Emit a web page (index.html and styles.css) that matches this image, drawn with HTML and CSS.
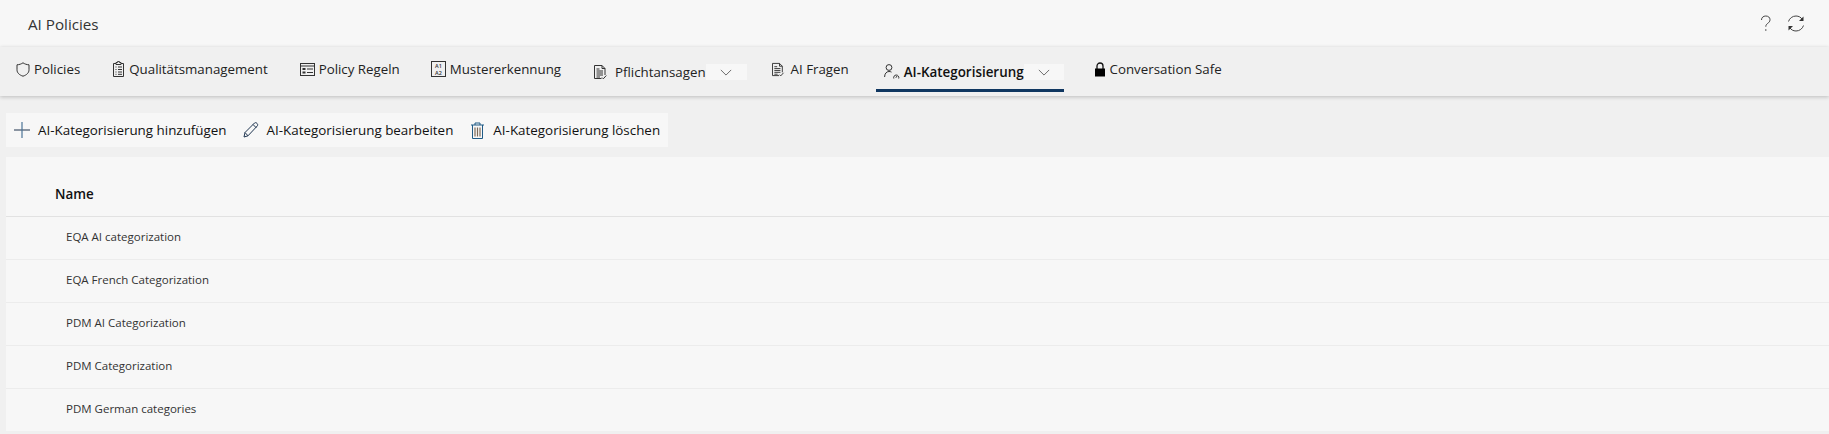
FILE: index.html
```html
<!DOCTYPE html>
<html lang="de">
<head>
<meta charset="utf-8">
<title>AI Policies</title>
<link rel="stylesheet" href="styles.css">
</head>
<body>
<svg class="defs" width="0" height="0" aria-hidden="true">
  <symbol id="doc" viewBox="1.500 0 16 16">
    <path d="M2 1.500h7.500l3 3v6.500M12.500 4.500h-3v-3M2 1.500v13h7" fill="none" stroke="#333" stroke-width="1"/>
    <path d="M4 5h3M4 7h6.500M4 9h6.500M4 11h6.500M4 13h3.500" fill="none" stroke="#333" stroke-width="1"/>
    <path d="M9.500 13.500l1.300 1.300 3-3.300" fill="none" stroke="#333" stroke-width="1"/>
  </symbol>
  <symbol id="chev" viewBox="0 0 14 8">
    <path d="M1 1l6 6 6-6" fill="none" stroke="#555" stroke-width="1"/>
  </symbol>
</svg>
<header class="title-bar">
  <h1 class="title">AI Policies</h1>
  <div class="title-actions">
    <svg class="ic-help" width="12" height="17" viewBox="0 0 12 17"><path d="M1.500 5C1.500 2.500 3.300 1 5.800 1s4.200 1.500 4.200 3.700c0 1.800-1 2.700-2.300 3.700-1.200.9-1.900 1.700-1.900 3.300" fill="none" stroke="#444" stroke-width="1"/><circle cx="5.800" cy="15" r=".8" fill="#444"/></svg>
    <svg width="18" height="17" viewBox="0 0 18 17"><path d="M1.500 6.500C2.500 3.300 5.400 1 9 1c2.700 0 5 1.300 6.300 3.400" fill="none" stroke="#444" stroke-width="1"/><path d="M16.500 10.500C15.500 13.700 12.600 16 9 16c-2.700 0-5-1.300-6.300-3.400" fill="none" stroke="#444" stroke-width="1"/><path d="M16.500 1.500v4.500h-4.500z" fill="#333"/><path d="M1.500 15.500v-4.500h4.500z" fill="#333"/></svg>
  </div>
</header>
<nav class="tabs">
  <a class="tab tab-first">
    <svg width="14" height="15" viewBox="0 0 14 15"><path d="M7 .8c1.700 1.200 3.700 1.900 6 2v5c0 3-2.200 5.100-6 6.400C3.200 12.900 1 10.800 1 7.800v-5c2.300-.1 4.300-.8 6-2z" fill="none" stroke="#333" stroke-width="1"/></svg>
    <span>Policies</span>
  </a>
  <a class="tab tab-quality">
    <svg width="13" height="16" viewBox="0 0 13 16"><path d="M4 2.500H1.500v13h10v-13H9" fill="none" stroke="#333" stroke-width="1"/><path d="M4 3.500v-2h1.500V.6h2v.9H9v2z" fill="none" stroke="#333" stroke-width="1"/><path d="M3.500 6h1M6 6h4M3.500 8.500h1M6 8.500h4M3.500 11h1M6 11h4M3.500 13.300h1M6 13.300h4" stroke="#333" stroke-width="1"/></svg>
    <span>Qualitätsmanagement</span>
  </a>
  <a class="tab tab-rules">
    <svg width="15" height="13" viewBox="0 0 15 13"><rect x=".5" y=".5" width="14" height="12" fill="none" stroke="#333"/><path d="M.5 3h14" stroke="#333"/><rect x="2.500" y="5" width="3" height="2" fill="#333"/><rect x="2.500" y="8.500" width="3" height="2" fill="#333"/><path d="M7 6h6M7 9.500h6" stroke="#333"/></svg>
    <span>Policy Regeln</span>
  </a>
  <a class="tab tab-pattern">
    <svg width="15" height="16" viewBox="0 0 15 16"><rect x=".5" y=".5" width="14" height="15" fill="none" stroke="#333"/><text class="tiny" x="7.500" y="7">A1</text><text class="tiny" x="7.500" y="13.500">A2</text></svg>
    <span>Mustererkennung</span>
  </a>
  <a class="tab tab-drop tab-duty">
    <svg width="16" height="16"><use href="#doc"/></svg>
    <span>Pflichtansagen</span>
    <span class="chev"><svg width="12" height="7"><use href="#chev"/></svg></span>
  </a>
  <a class="tab tab-questions">
    <svg width="15" height="15"><use href="#doc"/></svg>
    <span>AI Fragen</span>
  </a>
  <a class="tab tab-drop tab-active">
    <svg class="ic-person" width="16" height="16" viewBox="0 0 16 16"><circle cx="5" cy="3.500" r="2.900" fill="none" stroke="#333"/><path d="M.6 13c0-3.300 1.800-5.500 4.400-5.500 1 0 1.800.2 2.500.6" fill="none" stroke="#333"/><path d="M9.800 14.500a2.600 2.600 0 1 1 4.900 0" fill="none" stroke="#333"/><path d="M11.800 13.800l1.300-1.800" stroke="#333"/></svg>
    <span>AI-Kategorisierung</span>
    <span class="chev"><svg width="12" height="7"><use href="#chev"/></svg></span>
  </a>
  <a class="tab tab-safe">
    <svg width="12" height="15" viewBox="0 0 12 15"><path d="M3 7V4a3 3 0 0 1 6 0v3" fill="none" stroke="#111" stroke-width="1.300"/><rect x="1" y="6.500" width="10" height="8" fill="#000"/></svg>
    <span>Conversation Safe</span>
  </a>
</nav>
<main class="content">
  <div class="toolbar">
    <button class="cmd cmd-add">
      <svg width="16" height="16" viewBox="0 0 16 16"><path d="M0 8h16" stroke="#44546a" stroke-width="1.200"/><path d="M8 0v16" stroke="#4a7396" stroke-width="1.200"/></svg>
      <span>AI-Kategorisierung hinzufügen</span>
    </button>
    <button class="cmd cmd-edit">
      <svg width="16" height="16" viewBox="0 0 16 16"><path d="M1 15l1-4.500L11.500 1c.8-.6 1.800-.4 2.500.4.800.8.900 1.700.3 2.500L5 13.800z" fill="none" stroke="#1f3550" stroke-width="1"/><path d="M2 10.500l3 3.300M10 2.500l3.300 3.300" stroke="#1f3550"/></svg>
      <span>AI-Kategorisierung bearbeiten</span>
    </button>
    <button class="cmd cmd-del">
      <svg width="15" height="17" viewBox="0 0 15 17"><path d="M1 3h13M5 3V1h5v2" fill="none" stroke="#1f5a85"/><path d="M2.500 3v13.500h10V3" fill="none" stroke="#1f5a85"/><path d="M5 5.500v9M7.500 5.500v9M10 5.500v9" stroke="#7d6a58" stroke-width="1.200"/></svg>
      <span>AI-Kategorisierung löschen</span>
    </button>
  </div>
  <section class="table">
    <div class="table-head">Name</div>
    <div class="row">EQA AI categorization</div>
    <div class="row">EQA French Categorization</div>
    <div class="row">PDM AI Categorization</div>
    <div class="row">PDM Categorization</div>
    <div class="row">PDM German categories</div>
  </section>
</main>
</body>
</html>
```

FILE: styles.css
```css
* { box-sizing: border-box; }
html, body { margin: 0; padding: 0; }
body {
  width: 1829px;
  height: 434px;
  overflow: hidden;
  background: #f0f0f0;
  color: #222;
  font-family: "Open Sans", "Liberation Sans", sans-serif;
  font-size: 13.400px;
}
.defs { position: absolute; }
svg { display: block; flex: none; }
.title-bar {
  height: 47px;
  background: #f7f7f7;
  display: flex;
  align-items: center;
  justify-content: space-between;
  padding: 0 24px 0 28px;
}
.title { margin: 0; font-size: 15.200px; font-weight: 400; color: #333; }
.title-actions { display: flex; align-items: center; gap: 15px; }
.tabs {
  height: 49px;
  background: #f0f0f0;
  padding: 0 0 4px 0;
  display: flex;
  font-size: 13.300px;
  box-shadow: 0 1px 4px rgba(0, 0, 0, .22);
  position: relative;
}
.tab {
  display: flex;
  align-items: center;
  gap: 4px;
  padding: 2px 16px 0;
  border-bottom: 3px solid transparent;
  white-space: nowrap;
  color: #222;
}
.tab-pattern { padding-left: 15px; }
.tab-drop { padding-top: 8px; padding-right: 0; }
.tab-duty { padding-left: 17px; }
.tab-duty > span:first-of-type { margin-left: 1px; }
.chev {
  display: flex;
  align-items: center;
  justify-content: center;
  width: 41px;
  height: 16px;
  margin-left: -4px;
  background: #f7f7f7;
}
.tab-questions { margin-left: 9px; padding-right: 27px; }
.tab-active {
  padding-left: 8px;
  padding-right: 0;
  border-bottom-color: #0f3660;
  font-weight: 600;
  font-size: 13.400px;
  color: #111;
}
.tab-active .chev { width: 40px; }
.tab-safe { margin-left: 14px; }
.tiny {
  font-size: 5.500px;
  font-weight: 600;
  text-anchor: middle;
  fill: #333;
}
.content { padding: 17px 0 0 6px; }
.toolbar {
  display: inline-flex;
  height: 34px;
  background: #f7f7f7;
  vertical-align: top;
}
.cmd {
  display: flex;
  align-items: center;
  gap: 8px;
  border: 0;
  background: none;
  padding: 0 8px;
  font: inherit;
  color: #111;
  white-space: nowrap;
}
.cmd-del { padding-left: 9px; }
.table {
  margin-top: 10px;
  background: #f7f7f7;
  height: 274px;
}
.table-head {
  height: 60px;
  padding: 27px 0 0 49px;
  line-height: 20px;
  font-weight: 600;
  color: #111;
  border-bottom: 1px solid #e2e2e2;
}
.row {
  height: 43px;
  padding: 0 0 0 60px;
  line-height: 40px;
  font-size: 11.500px;
  color: #333;
  border-bottom: 1px solid #ececec;
}
.row:last-child { border-bottom: 0; }
```
